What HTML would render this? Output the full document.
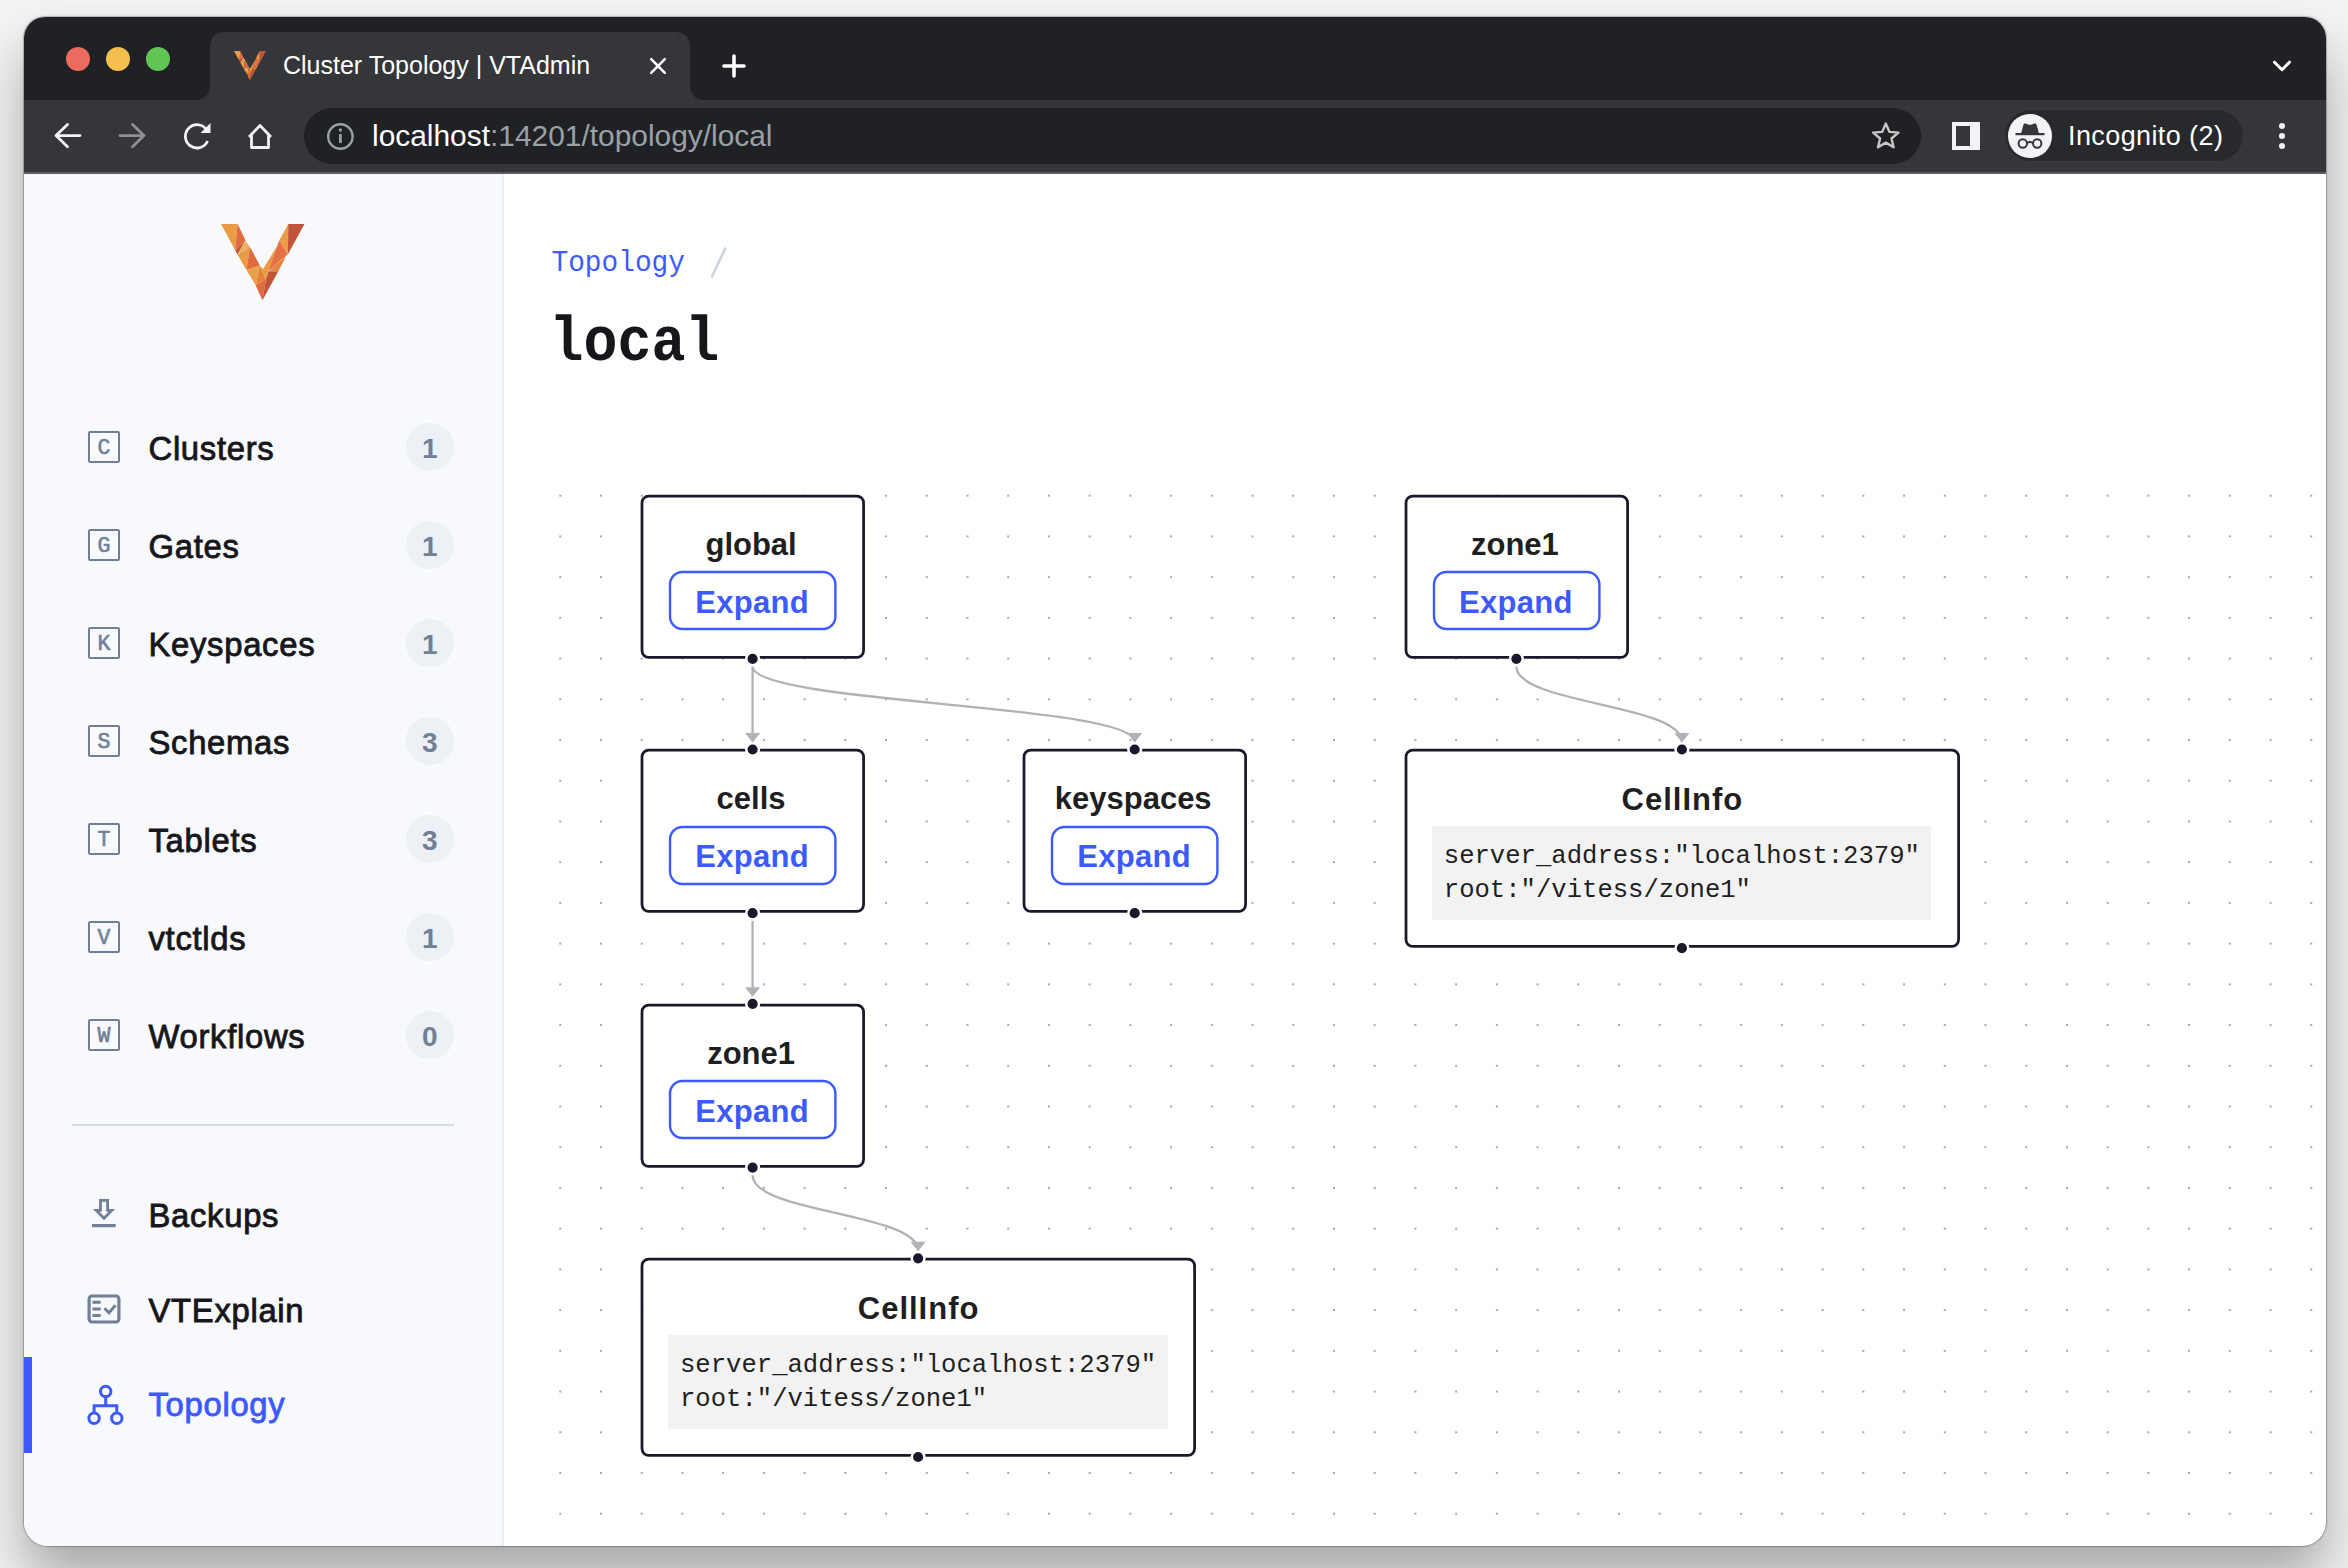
<!DOCTYPE html>
<html><head><meta charset="utf-8"><title>Cluster Topology | VTAdmin</title>
<style>
html,body{margin:0;padding:0}
body{width:2348px;height:1568px;position:relative;overflow:hidden;background:#f4f4f4;font-family:"Liberation Sans",sans-serif}
#win{position:absolute;left:24px;top:17px;width:2302px;height:1529px;border-radius:21px 21px 24px 24px;overflow:hidden;background:#fff;box-shadow:0 0 0 1px rgba(0,0,0,0.16),0 0 3px rgba(0,0,0,0.24),0 32px 56px rgba(0,0,0,0.32)}
#abs{position:absolute;left:-24px;top:-17px;width:2348px;height:1568px}
</style></head><body>
<div id="win"><div id="abs">
<div style="position:absolute;left:0.00px;top:0.00px;width:2348.00px;height:100.00px;background:#202124"></div>
<div style="position:absolute;left:0.00px;top:99.70px;width:2348.00px;height:72.00px;background:#35363a"></div>
<div style="position:absolute;left:0.00px;top:171.60px;width:2348.00px;height:2.00px;background:#5d5e62"></div>
<svg style="position:absolute;left:0;top:0" width="2348" height="120">
<path d="M194 100 Q210 100 210 84 L210 48 Q210 32 226 32 L674 32 Q690 32 690 48 L690 84 Q690 100 706 100 Z" fill="#35363a"/>
</svg>
<div style="position:absolute;left:66.00px;top:47.00px;width:24.00px;height:24.00px;border-radius:50%;background:#ed6a5e"></div>
<div style="position:absolute;left:106.00px;top:47.00px;width:24.00px;height:24.00px;border-radius:50%;background:#f5bf4f"></div>
<div style="position:absolute;left:146.00px;top:47.00px;width:24.00px;height:24.00px;border-radius:50%;background:#61c554"></div>
<svg style="position:absolute;left:234px;top:51px" width="32" height="29.5" viewBox="175 215 1310 1195" preserveAspectRatio="none"><polygon points="175,215 435,215 398,625" fill="#e99c45"/><polygon points="435,215 560,470 398,625" fill="#e06b3e"/><polygon points="398,625 555,475 435,695" fill="#c4553a"/><polygon points="555,475 630,575 435,695" fill="#eeb060"/><polygon points="435,695 630,575 575,935" fill="#e99c45"/><polygon points="630,575 785,865 575,935" fill="#e06b3a"/><polygon points="575,935 785,865 720,1180" fill="#e9a04a"/><polygon points="785,865 880,1075 720,1180" fill="#e5823e"/><polygon points="720,1180 880,1075 825,1410" fill="#e06b3a"/><polygon points="880,1075 920,955 1075,955 825,1410" fill="#c05535"/><polygon points="785,865 835,920 1060,550 920,950 880,1075" fill="#e99c45"/><polygon points="1060,550 1090,470 1225,690 920,945" fill="#e57044"/><polygon points="920,945 1195,720 1075,955" fill="#e5823e"/><polygon points="1090,470 1230,215 1225,690" fill="#e99c45"/><polygon points="1230,215 1485,215 1225,690" fill="#c0553a"/></svg>
<div style="position:absolute;left:283.00px;top:53.13px;font-family:'Liberation Sans', sans-serif;font-size:25px;line-height:25px;font-weight:400;color:#ffffff;white-space:pre;">Cluster Topology | VTAdmin</div>
<svg style="position:absolute;left:640px;top:48px" width="36" height="36" viewBox="640 48 36 36">
<path d="M651.2 59.2 L664.8 72.8 M664.8 59.2 L651.2 72.8" stroke="#fff" stroke-width="2.6" stroke-linecap="round"/></svg>
<svg style="position:absolute;left:714px;top:46px" width="40" height="40" viewBox="714 46 40 40">
<path d="M734 56 V76 M724 66 H744" stroke="#fff" stroke-width="3.6" stroke-linecap="round"/></svg>
<svg style="position:absolute;left:2264px;top:50px" width="36" height="30" viewBox="2264 50 36 30">
<path d="M2274.5 62.2 L2282 69.7 L2289.5 62.2" stroke="#fff" stroke-width="3" fill="none" stroke-linecap="round" stroke-linejoin="round"/></svg>
<svg style="position:absolute;left:40px;top:110px" width="260" height="52" viewBox="40 110 260 52">
<path d="M80 135.6 H57 M67.5 124.5 L56 135.6 L67.5 146.8" stroke="#f1f3f4" stroke-width="2.8" fill="none" stroke-linecap="round" stroke-linejoin="round"/>
<path d="M120 135.6 H143 M132.5 124.5 L144 135.6 L132.5 146.8" stroke="#8e9094" stroke-width="2.8" fill="none" stroke-linecap="round" stroke-linejoin="round"/>
<path d="M207 130.5 A11.6 11.6 0 1 0 207.6 141" stroke="#f1f3f4" stroke-width="2.8" fill="none"/>
<path d="M210.5 123 L210.5 133 L200.5 133 Z" fill="#f1f3f4"/>
<path d="M249 137 L260 125.5 L271 137 M251.5 135 V147.5 H268.5 V135" stroke="#f1f3f4" stroke-width="2.8" fill="none" stroke-linejoin="round"/>
</svg>
<div style="position:absolute;left:304.20px;top:107.80px;width:1617.30px;height:56.00px;background:#202124;border-radius:28px"></div>
<svg style="position:absolute;left:320px;top:116px" width="42" height="42" viewBox="320 116 42 42">
<circle cx="340.4" cy="136.5" r="12.2" stroke="#9aa0a6" stroke-width="2.4" fill="none"/>
<rect x="339" y="134" width="2.8" height="9" fill="#9aa0a6"/><circle cx="340.4" cy="130" r="1.7" fill="#9aa0a6"/>
</svg>
<div style="position:absolute;left:372px;top:120.68px;font-family:'Liberation Sans', sans-serif;font-size:29.9px;line-height:29.9px;white-space:pre;color:#fff">localhost<span style="color:#9aa0a6">:14201/topology/local</span></div>
<svg style="position:absolute;left:1866px;top:116px" width="40" height="40" viewBox="1866 116 40 40">
<path d="M1885.8 123.5 L1889.4 131.9 L1898.4 132.6 L1891.5 138.5 L1893.6 147.3 L1885.8 142.6 L1878 147.3 L1880.1 138.5 L1873.2 132.6 L1882.2 131.9 Z" stroke="#c4c7c5" stroke-width="2.4" fill="none" stroke-linejoin="round"/></svg>
<div style="position:absolute;left:1951.80px;top:122.00px;width:28.00px;height:28.20px;background:#f1f3f4"></div>
<div style="position:absolute;left:1955.90px;top:126.00px;width:14.30px;height:19.70px;background:#35363a"></div>
<div style="position:absolute;left:2004.30px;top:109.30px;width:240.20px;height:53.10px;background:#28292c;border-radius:27px;box-sizing:border-box;border:1.5px solid #3c3d41"></div>
<div style="position:absolute;left:2008.20px;top:114.20px;width:43.40px;height:43.40px;background:#f1f3f4;border-radius:50%"></div>
<svg style="position:absolute;left:2008px;top:114px" width="44" height="44" viewBox="2008 114 44 44">
<path d="M2021 133.5 L2039 133.5 L2036.5 124.5 Q2036 123 2034.5 123.5 L2030 125 L2025.5 123.5 Q2024 123 2023.5 124.5 Z" fill="#35363a"/>
<rect x="2015.5" y="133" width="29" height="2.2" fill="#35363a"/>
<circle cx="2022.8" cy="143.5" r="4.2" stroke="#35363a" stroke-width="2" fill="none"/>
<circle cx="2037.2" cy="143.5" r="4.2" stroke="#35363a" stroke-width="2" fill="none"/>
<path d="M2027 143 Q2030 141 2033 143" stroke="#35363a" stroke-width="2" fill="none"/>
</svg>
<div style="position:absolute;left:2068.00px;top:122.84px;font-family:'Liberation Sans', sans-serif;font-size:27px;line-height:27px;font-weight:400;color:#fff;white-space:pre;letter-spacing:0.4px;">Incognito (2)</div>
<div style="position:absolute;left:2278.70px;top:123.00px;width:6.00px;height:6.00px;border-radius:50%;background:#f1f3f4"></div>
<div style="position:absolute;left:2278.70px;top:132.90px;width:6.00px;height:6.00px;border-radius:50%;background:#f1f3f4"></div>
<div style="position:absolute;left:2278.70px;top:142.70px;width:6.00px;height:6.00px;border-radius:50%;background:#f1f3f4"></div>
<div style="position:absolute;left:0.00px;top:173.50px;width:503.00px;height:1400.00px;background:#f7f9fd"></div>
<div style="position:absolute;left:502.00px;top:173.50px;width:2.00px;height:1400.00px;background:#ebeff5"></div>
<svg style="position:absolute;left:221.2px;top:223.7px" width="83.5" height="76.3" viewBox="175 215 1310 1195" preserveAspectRatio="none"><polygon points="175,215 435,215 398,625" fill="#e99c45"/><polygon points="435,215 560,470 398,625" fill="#e06b3e"/><polygon points="398,625 555,475 435,695" fill="#c4553a"/><polygon points="555,475 630,575 435,695" fill="#eeb060"/><polygon points="435,695 630,575 575,935" fill="#e99c45"/><polygon points="630,575 785,865 575,935" fill="#e06b3a"/><polygon points="575,935 785,865 720,1180" fill="#e9a04a"/><polygon points="785,865 880,1075 720,1180" fill="#e5823e"/><polygon points="720,1180 880,1075 825,1410" fill="#e06b3a"/><polygon points="880,1075 920,955 1075,955 825,1410" fill="#c05535"/><polygon points="785,865 835,920 1060,550 920,950 880,1075" fill="#e99c45"/><polygon points="1060,550 1090,470 1225,690 920,945" fill="#e57044"/><polygon points="920,945 1195,720 1075,955" fill="#e5823e"/><polygon points="1090,470 1230,215 1225,690" fill="#e99c45"/><polygon points="1230,215 1485,215 1225,690" fill="#c0553a"/></svg>
<div style="position:absolute;left:88.40px;top:431.30px;width:31.30px;height:31.30px;box-sizing:border-box;border:2px solid #718096;border-radius:2px"></div>
<div style="position:absolute;left:88.4px;top:433.10px;width:31.3px;height:31.3px;line-height:31.3px;text-align:center;font-family:'Liberation Mono', monospace;font-size:21.5px;font-weight:400;color:#718096;-webkit-text-stroke:0.6px #718096">C</div>
<div style="position:absolute;left:148.50px;top:432.63px;font-family:'Liberation Sans', sans-serif;font-size:32.8px;line-height:32.8px;font-weight:400;color:#17171b;white-space:pre;letter-spacing:0.7px;-webkit-text-stroke:0.85px #17171b;">Clusters</div>
<div style="position:absolute;left:405.50px;top:422.70px;width:48.60px;height:48.60px;border-radius:50%;background:#edf0f5"></div>
<div style="position:absolute;left:405.5px;top:422.70px;width:48.6px;height:48.6px;line-height:48.6px;padding-top:2px;box-sizing:border-box;text-align:center;font-family:'Liberation Sans', sans-serif;font-size:28px;font-weight:700;color:#718096">1</div>
<div style="position:absolute;left:88.40px;top:529.30px;width:31.30px;height:31.30px;box-sizing:border-box;border:2px solid #718096;border-radius:2px"></div>
<div style="position:absolute;left:88.4px;top:531.10px;width:31.3px;height:31.3px;line-height:31.3px;text-align:center;font-family:'Liberation Mono', monospace;font-size:21.5px;font-weight:400;color:#718096;-webkit-text-stroke:0.6px #718096">G</div>
<div style="position:absolute;left:148.50px;top:530.63px;font-family:'Liberation Sans', sans-serif;font-size:32.8px;line-height:32.8px;font-weight:400;color:#17171b;white-space:pre;letter-spacing:0.7px;-webkit-text-stroke:0.85px #17171b;">Gates</div>
<div style="position:absolute;left:405.50px;top:520.70px;width:48.60px;height:48.60px;border-radius:50%;background:#edf0f5"></div>
<div style="position:absolute;left:405.5px;top:520.70px;width:48.6px;height:48.6px;line-height:48.6px;padding-top:2px;box-sizing:border-box;text-align:center;font-family:'Liberation Sans', sans-serif;font-size:28px;font-weight:700;color:#718096">1</div>
<div style="position:absolute;left:88.40px;top:627.30px;width:31.30px;height:31.30px;box-sizing:border-box;border:2px solid #718096;border-radius:2px"></div>
<div style="position:absolute;left:88.4px;top:629.10px;width:31.3px;height:31.3px;line-height:31.3px;text-align:center;font-family:'Liberation Mono', monospace;font-size:21.5px;font-weight:400;color:#718096;-webkit-text-stroke:0.6px #718096">K</div>
<div style="position:absolute;left:148.50px;top:628.63px;font-family:'Liberation Sans', sans-serif;font-size:32.8px;line-height:32.8px;font-weight:400;color:#17171b;white-space:pre;letter-spacing:0.7px;-webkit-text-stroke:0.85px #17171b;">Keyspaces</div>
<div style="position:absolute;left:405.50px;top:618.70px;width:48.60px;height:48.60px;border-radius:50%;background:#edf0f5"></div>
<div style="position:absolute;left:405.5px;top:618.70px;width:48.6px;height:48.6px;line-height:48.6px;padding-top:2px;box-sizing:border-box;text-align:center;font-family:'Liberation Sans', sans-serif;font-size:28px;font-weight:700;color:#718096">1</div>
<div style="position:absolute;left:88.40px;top:725.30px;width:31.30px;height:31.30px;box-sizing:border-box;border:2px solid #718096;border-radius:2px"></div>
<div style="position:absolute;left:88.4px;top:727.10px;width:31.3px;height:31.3px;line-height:31.3px;text-align:center;font-family:'Liberation Mono', monospace;font-size:21.5px;font-weight:400;color:#718096;-webkit-text-stroke:0.6px #718096">S</div>
<div style="position:absolute;left:148.50px;top:726.63px;font-family:'Liberation Sans', sans-serif;font-size:32.8px;line-height:32.8px;font-weight:400;color:#17171b;white-space:pre;letter-spacing:0.7px;-webkit-text-stroke:0.85px #17171b;">Schemas</div>
<div style="position:absolute;left:405.50px;top:716.70px;width:48.60px;height:48.60px;border-radius:50%;background:#edf0f5"></div>
<div style="position:absolute;left:405.5px;top:716.70px;width:48.6px;height:48.6px;line-height:48.6px;padding-top:2px;box-sizing:border-box;text-align:center;font-family:'Liberation Sans', sans-serif;font-size:28px;font-weight:700;color:#718096">3</div>
<div style="position:absolute;left:88.40px;top:823.30px;width:31.30px;height:31.30px;box-sizing:border-box;border:2px solid #718096;border-radius:2px"></div>
<div style="position:absolute;left:88.4px;top:825.10px;width:31.3px;height:31.3px;line-height:31.3px;text-align:center;font-family:'Liberation Mono', monospace;font-size:21.5px;font-weight:400;color:#718096;-webkit-text-stroke:0.6px #718096">T</div>
<div style="position:absolute;left:148.50px;top:824.63px;font-family:'Liberation Sans', sans-serif;font-size:32.8px;line-height:32.8px;font-weight:400;color:#17171b;white-space:pre;letter-spacing:0.7px;-webkit-text-stroke:0.85px #17171b;">Tablets</div>
<div style="position:absolute;left:405.50px;top:814.70px;width:48.60px;height:48.60px;border-radius:50%;background:#edf0f5"></div>
<div style="position:absolute;left:405.5px;top:814.70px;width:48.6px;height:48.6px;line-height:48.6px;padding-top:2px;box-sizing:border-box;text-align:center;font-family:'Liberation Sans', sans-serif;font-size:28px;font-weight:700;color:#718096">3</div>
<div style="position:absolute;left:88.40px;top:921.30px;width:31.30px;height:31.30px;box-sizing:border-box;border:2px solid #718096;border-radius:2px"></div>
<div style="position:absolute;left:88.4px;top:923.10px;width:31.3px;height:31.3px;line-height:31.3px;text-align:center;font-family:'Liberation Mono', monospace;font-size:21.5px;font-weight:400;color:#718096;-webkit-text-stroke:0.6px #718096">V</div>
<div style="position:absolute;left:148.50px;top:922.63px;font-family:'Liberation Sans', sans-serif;font-size:32.8px;line-height:32.8px;font-weight:400;color:#17171b;white-space:pre;letter-spacing:0.7px;-webkit-text-stroke:0.85px #17171b;">vtctlds</div>
<div style="position:absolute;left:405.50px;top:912.70px;width:48.60px;height:48.60px;border-radius:50%;background:#edf0f5"></div>
<div style="position:absolute;left:405.5px;top:912.70px;width:48.6px;height:48.6px;line-height:48.6px;padding-top:2px;box-sizing:border-box;text-align:center;font-family:'Liberation Sans', sans-serif;font-size:28px;font-weight:700;color:#718096">1</div>
<div style="position:absolute;left:88.40px;top:1019.30px;width:31.30px;height:31.30px;box-sizing:border-box;border:2px solid #718096;border-radius:2px"></div>
<div style="position:absolute;left:88.4px;top:1021.10px;width:31.3px;height:31.3px;line-height:31.3px;text-align:center;font-family:'Liberation Mono', monospace;font-size:21.5px;font-weight:400;color:#718096;-webkit-text-stroke:0.6px #718096">W</div>
<div style="position:absolute;left:148.50px;top:1020.63px;font-family:'Liberation Sans', sans-serif;font-size:32.8px;line-height:32.8px;font-weight:400;color:#17171b;white-space:pre;letter-spacing:0.7px;-webkit-text-stroke:0.85px #17171b;">Workflows</div>
<div style="position:absolute;left:405.50px;top:1010.70px;width:48.60px;height:48.60px;border-radius:50%;background:#edf0f5"></div>
<div style="position:absolute;left:405.5px;top:1010.70px;width:48.6px;height:48.6px;line-height:48.6px;padding-top:2px;box-sizing:border-box;text-align:center;font-family:'Liberation Sans', sans-serif;font-size:28px;font-weight:700;color:#718096">0</div>
<div style="position:absolute;left:72.20px;top:1123.80px;width:381.50px;height:2.00px;background:#d5dbe3"></div>
<div style="position:absolute;left:148.50px;top:1199.63px;font-family:'Liberation Sans', sans-serif;font-size:32.8px;line-height:32.8px;font-weight:400;color:#17171b;white-space:pre;letter-spacing:0.7px;-webkit-text-stroke:0.85px #17171b;">Backups</div>
<div style="position:absolute;left:148.50px;top:1295.13px;font-family:'Liberation Sans', sans-serif;font-size:32.8px;line-height:32.8px;font-weight:400;color:#17171b;white-space:pre;letter-spacing:0.7px;-webkit-text-stroke:0.85px #17171b;">VTExplain</div>
<div style="position:absolute;left:148.50px;top:1389.13px;font-family:'Liberation Sans', sans-serif;font-size:32.8px;line-height:32.8px;font-weight:400;color:#3d5afe;white-space:pre;letter-spacing:0.7px;-webkit-text-stroke:0.85px #3d5afe;">Topology</div>
<div style="position:absolute;left:24.00px;top:1357.30px;width:8.00px;height:95.50px;background:#3d5afe"></div>
<svg style="position:absolute;left:80px;top:1190px" width="50" height="250" viewBox="80 1190 50 250">
<path fill-rule="evenodd" fill="#718096" d="M99.1 1199 H109 V1209 H115.2 L104 1220.2 L92.9 1209 H99.1 Z M101.9 1201.8 V1211.8 H108.5 L104 1216.3 L99.5 1211.8 H101.9 Z M106.2 1201.8 H101.9 V1211.8 H106.2 Z"/>
<rect x="92" y="1224" width="23.7" height="3.2" fill="#718096"/>
<rect x="89.1" y="1296" width="29.8" height="26" rx="3" stroke="#718096" stroke-width="3.2" fill="none"/>
<path d="M92.4 1302.2 H100.7 M92.4 1308.9 H100.7 M92.4 1315.5 H100.7" stroke="#718096" stroke-width="3"/>
<path d="M104.5 1308.3 L109 1312.7 L115.5 1305.2" stroke="#718096" stroke-width="3" fill="none"/>
<circle cx="105.7" cy="1391.4" r="5.2" stroke="#3d5afe" stroke-width="3" fill="none"/>
<circle cx="94.1" cy="1418.3" r="5.2" stroke="#3d5afe" stroke-width="3" fill="none"/>
<circle cx="116.8" cy="1418.3" r="5.2" stroke="#3d5afe" stroke-width="3" fill="none"/>
<path d="M105.7 1396.6 V1405.8 M94.1 1413.1 V1405.8 H116.8 V1413.1" stroke="#3d5afe" stroke-width="3" fill="none"/>
</svg>
<div style="position:absolute;left:551.50px;top:250.30px;font-family:'Liberation Mono', monospace;font-size:27.8px;line-height:27.8px;font-weight:400;color:#3d5afe;white-space:pre;transform:scale(1,1.07);transform-origin:0px 21.30px;">Topology</div>
<svg style="position:absolute;left:700px;top:240px" width="40" height="45" viewBox="700 240 40 45"><path d="M725.2 248.5 L712 276.5" stroke="#cbd5e0" stroke-width="2.6" stroke-linecap="round"/></svg>
<div style="position:absolute;left:549.50px;top:317.24px;font-family:'Liberation Mono', monospace;font-size:56.6px;line-height:56.6px;font-weight:700;color:#17171b;white-space:pre;transform:scale(1,1.1);transform-origin:0px 43.36px;">local</div>
<svg style="position:absolute;left:553px;top:470px" width="1800" height="1100" viewBox="553 470 1800 1100">
<defs><pattern id="dots" patternUnits="userSpaceOnUse" x="559.3" y="494.7" width="40.72" height="40.72"><rect x="0" y="0" width="2" height="2" fill="#a8a8ae"/></pattern></defs>
<rect x="553" y="470" width="1800" height="1100" fill="url(#dots)"/></svg>
<svg style="position:absolute;left:0;top:0" width="2348" height="1568"><path d="M752.60,666.40 C752.60,704.05 752.60,704.05 752.60,741.70" stroke="#b1b1b7" stroke-width="2.3" fill="none"/><polygon points="745.80,733.40 759.40,733.40 752.60,741.70" fill="#b1b1b7" stroke="#b1b1b7" stroke-width="1" stroke-linejoin="round"/><path d="M752.60,666.40 C752.60,704.05 1134.70,704.05 1134.70,741.70" stroke="#b1b1b7" stroke-width="2.3" fill="none"/><polygon points="1127.90,733.40 1141.50,733.40 1134.70,741.70" fill="#b1b1b7" stroke="#b1b1b7" stroke-width="1" stroke-linejoin="round"/><path d="M752.60,920.80 C752.60,958.45 752.60,958.45 752.60,996.10" stroke="#b1b1b7" stroke-width="2.3" fill="none"/><polygon points="745.80,987.80 759.40,987.80 752.60,996.10" fill="#b1b1b7" stroke="#b1b1b7" stroke-width="1" stroke-linejoin="round"/><path d="M752.60,1175.20 C752.60,1212.85 918.10,1212.85 918.10,1250.50" stroke="#b1b1b7" stroke-width="2.3" fill="none"/><polygon points="911.30,1242.20 924.90,1242.20 918.10,1250.50" fill="#b1b1b7" stroke="#b1b1b7" stroke-width="1" stroke-linejoin="round"/><path d="M1516.40,666.40 C1516.40,704.05 1681.90,704.05 1681.90,741.70" stroke="#b1b1b7" stroke-width="2.3" fill="none"/><polygon points="1675.10,733.40 1688.70,733.40 1681.90,741.70" fill="#b1b1b7" stroke="#b1b1b7" stroke-width="1" stroke-linejoin="round"/></svg>
<svg style="position:absolute;left:636.80px;top:491.00px" width="231.60" height="171.40"><rect x="5" y="5" width="221.60" height="161.40" rx="6.8" fill="#fff" stroke="#1a192b" stroke-width="2.75"/></svg>
<div style="position:absolute;left:451.10px;top:528.75px;width:600px;text-align:center;font-family:'Liberation Sans', sans-serif;font-size:31px;line-height:31px;font-weight:700;color:#1f1f1f;white-space:pre;">global</div>
<svg style="position:absolute;left:666.10px;top:568.30px" width="173.40" height="65"><rect x="4" y="4" width="165.40" height="57" rx="12.5" fill="none" stroke="#3d5afe" stroke-width="2.4"/></svg>
<div style="position:absolute;left:452.10px;top:586.75px;width:600px;text-align:center;font-family:'Liberation Sans', sans-serif;font-size:31px;line-height:31px;font-weight:700;color:#3d5afe;white-space:pre;letter-spacing:0.3px;">Expand</div>
<svg style="position:absolute;left:1400.60px;top:491.00px" width="231.60" height="171.40"><rect x="5" y="5" width="221.60" height="161.40" rx="6.8" fill="#fff" stroke="#1a192b" stroke-width="2.75"/></svg>
<div style="position:absolute;left:1214.90px;top:528.75px;width:600px;text-align:center;font-family:'Liberation Sans', sans-serif;font-size:31px;line-height:31px;font-weight:700;color:#1f1f1f;white-space:pre;">zone1</div>
<svg style="position:absolute;left:1429.90px;top:568.30px" width="173.40" height="65"><rect x="4" y="4" width="165.40" height="57" rx="12.5" fill="none" stroke="#3d5afe" stroke-width="2.4"/></svg>
<div style="position:absolute;left:1215.90px;top:586.75px;width:600px;text-align:center;font-family:'Liberation Sans', sans-serif;font-size:31px;line-height:31px;font-weight:700;color:#3d5afe;white-space:pre;letter-spacing:0.3px;">Expand</div>
<svg style="position:absolute;left:636.80px;top:745.40px" width="231.60" height="171.40"><rect x="5" y="5" width="221.60" height="161.40" rx="6.8" fill="#fff" stroke="#1a192b" stroke-width="2.75"/></svg>
<div style="position:absolute;left:451.10px;top:783.15px;width:600px;text-align:center;font-family:'Liberation Sans', sans-serif;font-size:31px;line-height:31px;font-weight:700;color:#1f1f1f;white-space:pre;">cells</div>
<svg style="position:absolute;left:666.10px;top:822.70px" width="173.40" height="65"><rect x="4" y="4" width="165.40" height="57" rx="12.5" fill="none" stroke="#3d5afe" stroke-width="2.4"/></svg>
<div style="position:absolute;left:452.10px;top:841.15px;width:600px;text-align:center;font-family:'Liberation Sans', sans-serif;font-size:31px;line-height:31px;font-weight:700;color:#3d5afe;white-space:pre;letter-spacing:0.3px;">Expand</div>
<svg style="position:absolute;left:1018.90px;top:745.40px" width="231.60" height="171.40"><rect x="5" y="5" width="221.60" height="161.40" rx="6.8" fill="#fff" stroke="#1a192b" stroke-width="2.75"/></svg>
<div style="position:absolute;left:833.20px;top:783.15px;width:600px;text-align:center;font-family:'Liberation Sans', sans-serif;font-size:31px;line-height:31px;font-weight:700;color:#1f1f1f;white-space:pre;">keyspaces</div>
<svg style="position:absolute;left:1048.20px;top:822.70px" width="173.40" height="65"><rect x="4" y="4" width="165.40" height="57" rx="12.5" fill="none" stroke="#3d5afe" stroke-width="2.4"/></svg>
<div style="position:absolute;left:834.20px;top:841.15px;width:600px;text-align:center;font-family:'Liberation Sans', sans-serif;font-size:31px;line-height:31px;font-weight:700;color:#3d5afe;white-space:pre;letter-spacing:0.3px;">Expand</div>
<svg style="position:absolute;left:1400.60px;top:745.40px" width="562.60" height="206.40"><rect x="5" y="5" width="552.60" height="196.40" rx="6.8" fill="#fff" stroke="#1a192b" stroke-width="2.75"/></svg>
<div style="position:absolute;left:1382.40px;top:783.75px;width:600px;text-align:center;font-family:'Liberation Sans', sans-serif;font-size:31px;line-height:31px;font-weight:700;color:#1f1f1f;white-space:pre;letter-spacing:1px;">CellInfo</div>
<div style="position:absolute;left:1432.20px;top:826.40px;width:499.20px;height:93.40px;background:#f2f2f2"></div>
<div style="position:absolute;left:1443.80px;top:844.39px;font-family:'Liberation Mono', monospace;font-size:25.6px;line-height:25.6px;font-weight:400;color:#1f1f1f;white-space:pre;">server_address:"localhost:2379"</div>
<div style="position:absolute;left:1443.80px;top:878.29px;font-family:'Liberation Mono', monospace;font-size:25.6px;line-height:25.6px;font-weight:400;color:#1f1f1f;white-space:pre;">root:"/vitess/zone1"</div>
<svg style="position:absolute;left:636.80px;top:999.80px" width="231.60" height="171.40"><rect x="5" y="5" width="221.60" height="161.40" rx="6.8" fill="#fff" stroke="#1a192b" stroke-width="2.75"/></svg>
<div style="position:absolute;left:451.10px;top:1037.55px;width:600px;text-align:center;font-family:'Liberation Sans', sans-serif;font-size:31px;line-height:31px;font-weight:700;color:#1f1f1f;white-space:pre;">zone1</div>
<svg style="position:absolute;left:666.10px;top:1077.10px" width="173.40" height="65"><rect x="4" y="4" width="165.40" height="57" rx="12.5" fill="none" stroke="#3d5afe" stroke-width="2.4"/></svg>
<div style="position:absolute;left:452.10px;top:1095.55px;width:600px;text-align:center;font-family:'Liberation Sans', sans-serif;font-size:31px;line-height:31px;font-weight:700;color:#3d5afe;white-space:pre;letter-spacing:0.3px;">Expand</div>
<svg style="position:absolute;left:636.80px;top:1254.20px" width="562.60" height="206.40"><rect x="5" y="5" width="552.60" height="196.40" rx="6.8" fill="#fff" stroke="#1a192b" stroke-width="2.75"/></svg>
<div style="position:absolute;left:618.60px;top:1292.55px;width:600px;text-align:center;font-family:'Liberation Sans', sans-serif;font-size:31px;line-height:31px;font-weight:700;color:#1f1f1f;white-space:pre;letter-spacing:1px;">CellInfo</div>
<div style="position:absolute;left:668.40px;top:1335.20px;width:499.20px;height:93.40px;background:#f2f2f2"></div>
<div style="position:absolute;left:680.00px;top:1353.19px;font-family:'Liberation Mono', monospace;font-size:25.6px;line-height:25.6px;font-weight:400;color:#1f1f1f;white-space:pre;">server_address:"localhost:2379"</div>
<div style="position:absolute;left:680.00px;top:1387.09px;font-family:'Liberation Mono', monospace;font-size:25.6px;line-height:25.6px;font-weight:400;color:#1f1f1f;white-space:pre;">root:"/vitess/zone1"</div>
<svg style="position:absolute;left:0;top:0" width="2348" height="1568"><circle cx="752.60" cy="658.80" r="6.35" fill="#1a192b" stroke="#fff" stroke-width="2.5"/><circle cx="1516.40" cy="658.80" r="6.35" fill="#1a192b" stroke="#fff" stroke-width="2.5"/><circle cx="752.60" cy="749.50" r="6.35" fill="#1a192b" stroke="#fff" stroke-width="2.5"/><circle cx="752.60" cy="913.20" r="6.35" fill="#1a192b" stroke="#fff" stroke-width="2.5"/><circle cx="1134.70" cy="749.50" r="6.35" fill="#1a192b" stroke="#fff" stroke-width="2.5"/><circle cx="1134.70" cy="913.20" r="6.35" fill="#1a192b" stroke="#fff" stroke-width="2.5"/><circle cx="1681.90" cy="749.50" r="6.35" fill="#1a192b" stroke="#fff" stroke-width="2.5"/><circle cx="1681.90" cy="948.20" r="6.35" fill="#1a192b" stroke="#fff" stroke-width="2.5"/><circle cx="752.60" cy="1003.90" r="6.35" fill="#1a192b" stroke="#fff" stroke-width="2.5"/><circle cx="752.60" cy="1167.60" r="6.35" fill="#1a192b" stroke="#fff" stroke-width="2.5"/><circle cx="918.10" cy="1258.30" r="6.35" fill="#1a192b" stroke="#fff" stroke-width="2.5"/><circle cx="918.10" cy="1457.00" r="6.35" fill="#1a192b" stroke="#fff" stroke-width="2.5"/></svg>
</div></div>
</body></html>
